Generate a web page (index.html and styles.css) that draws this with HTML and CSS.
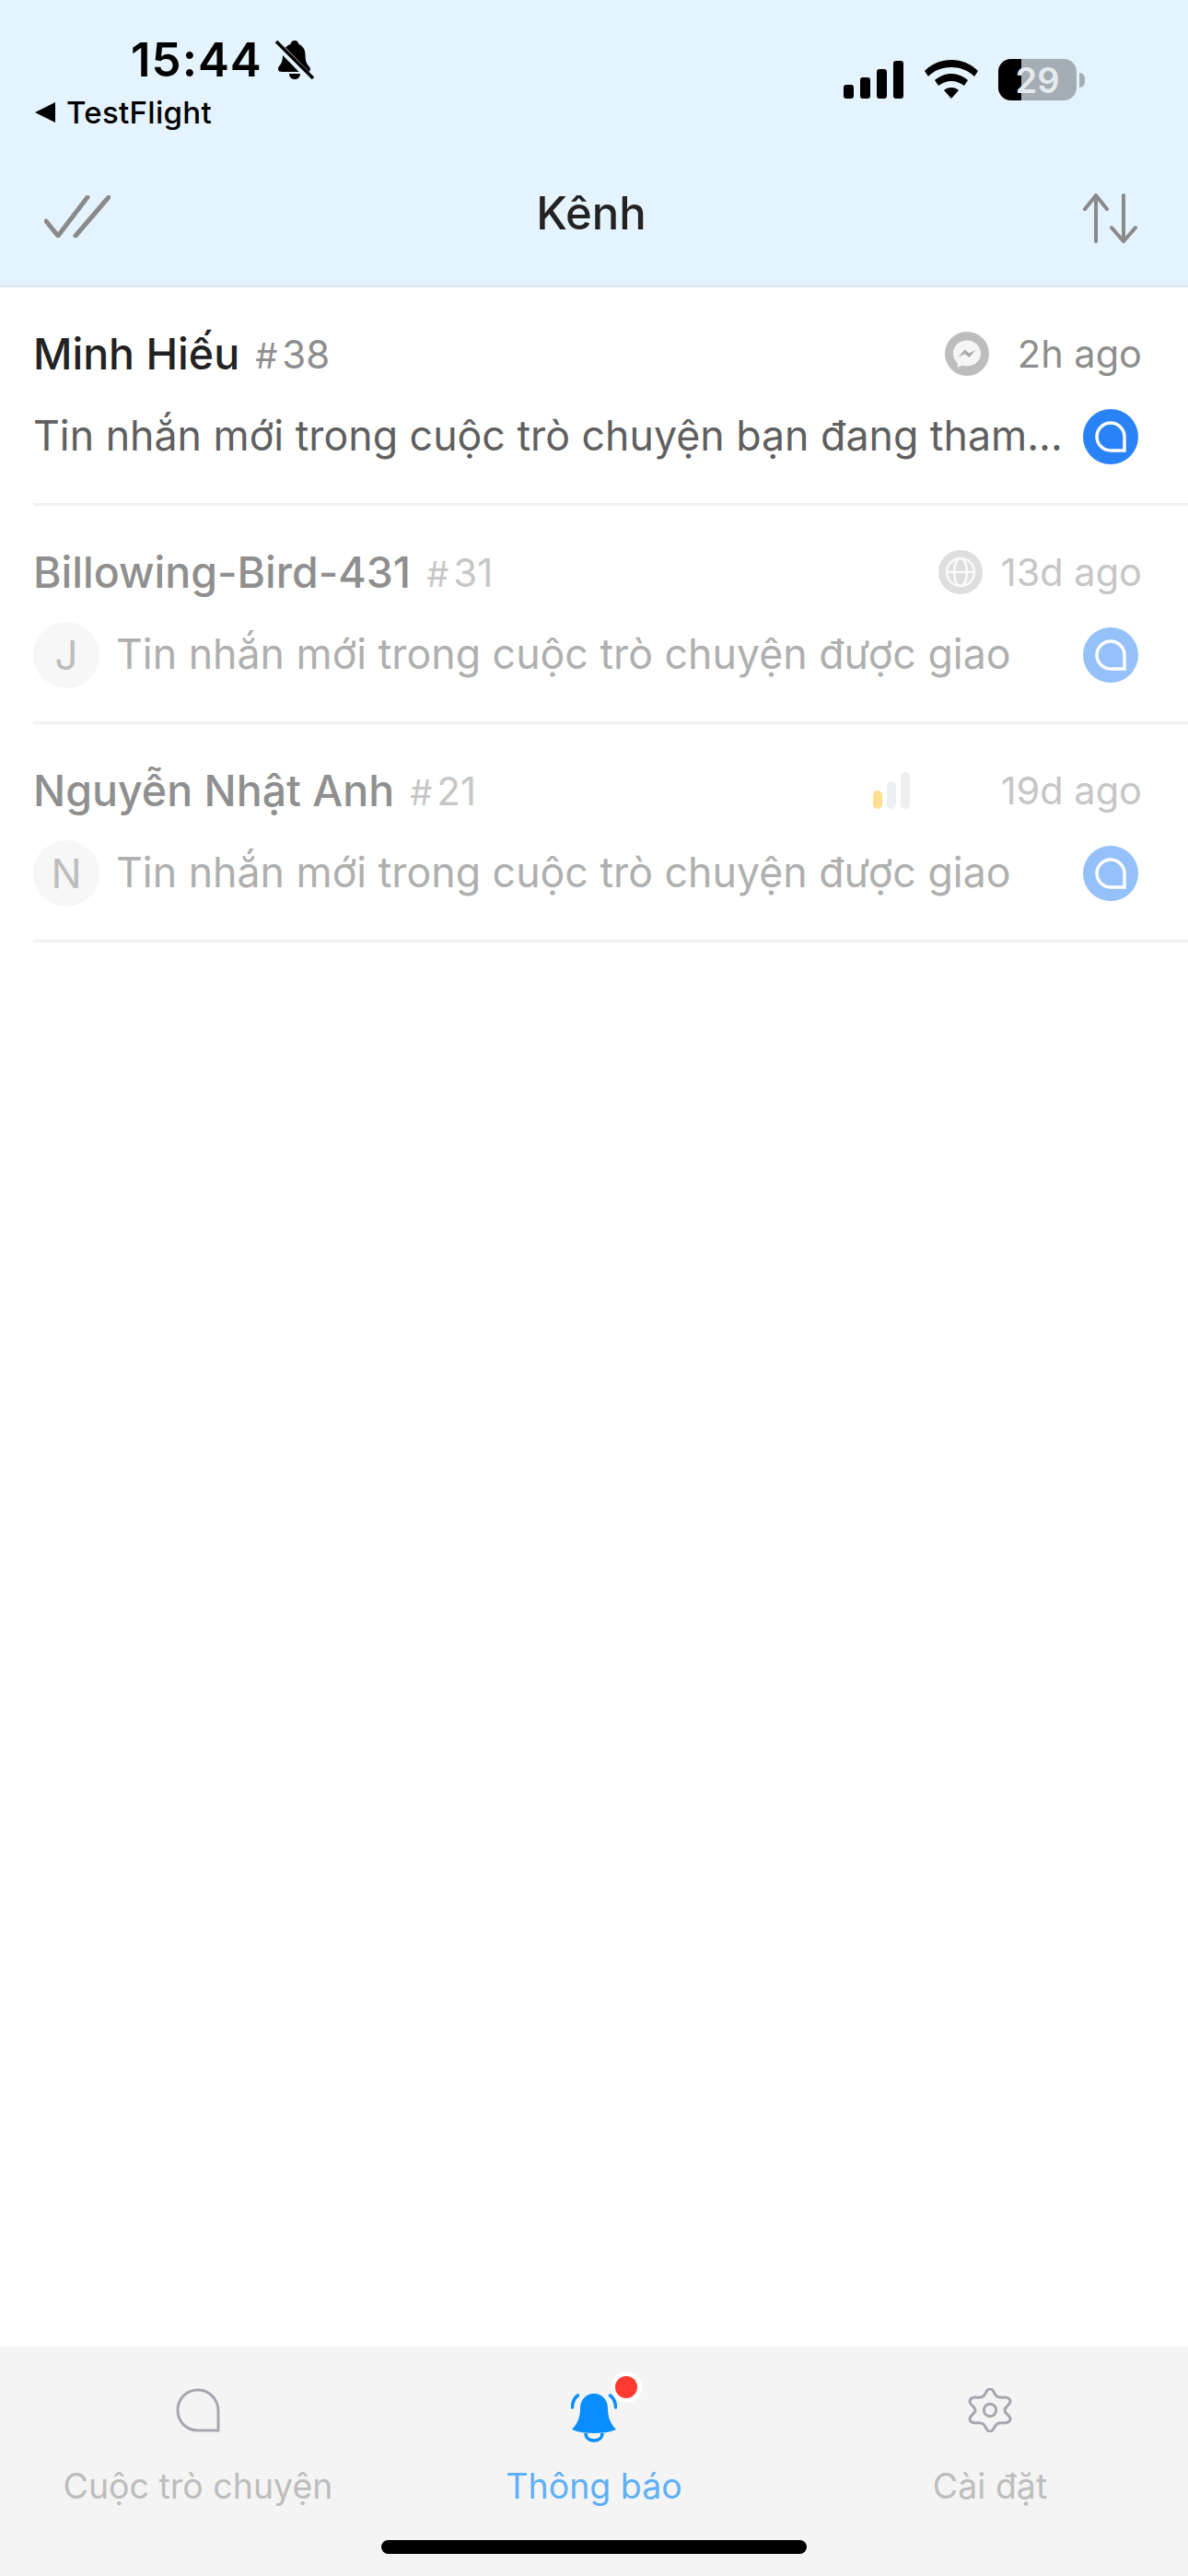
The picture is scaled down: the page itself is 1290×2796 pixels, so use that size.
FILE: index.html
```html
<!DOCTYPE html>
<html lang="vi">
<head>
    <meta charset="utf-8">
    <title>Kênh</title>
    <link rel="stylesheet" href="styles.css">
</head>
<body>
    <div class="app">
        <!-- Status bar and title share the pale blue header -->
        <header class="header">
            <div class="status">
                <div class="status-left">
                    <div class="clock-line">
                        <span class="clock">15:44</span>
                        <svg class="muted-bell" viewBox="0 0 42 44">
                            <path d="M21 1c3 0 4 2 4.5 4 4.5 2 7 6 7 11 0 6 1 10 4 13 2 2 2 6-1 6H7c-4 0-5-3-3-6 3-3 4-7 4-12 0-6 3-10 8.5-12C17 3 18 1 21 1z" fill="#000"/>
                            <path d="M15 37h12c0 4-3 6-6 6s-6-2-6-6z" fill="#000"/>
                            <path d="M1 4l38 39" stroke="#e4f3fd" stroke-width="8"/>
                            <path d="M1 2l40 40" stroke="#000" stroke-width="3.5"/>
                        </svg>
                    </div>
                    <div class="back-line">
                        <span class="back-arrow"></span>
                        <span class="back-label">TestFlight</span>
                    </div>
                </div>
                <div class="status-right">
                    <svg class="signal" viewBox="0 0 65 41">
                        <rect x="0" y="26" width="11" height="15" rx="3"/>
                        <rect x="18" y="18" width="11" height="23" rx="3"/>
                        <rect x="36" y="9" width="11" height="32" rx="3"/>
                        <rect x="54" y="0" width="11" height="41" rx="3"/>
                    </svg>
                    <svg class="wifi" viewBox="0 0 58 42">
                        <path d="M29 0c11 0 21 4 29 12l-4 6C47 11 38 8 29 8S11 11 4 18l-4-6C8 4 18 0 29 0z"/>
                        <path d="M29 15c7 0 13 3 18 7l-4 6c-4-3-9-5-14-5s-10 2-14 5l-4-6c5-4 11-7 18-7z"/>
                        <path d="M29 30c3 0 6 1 8 3l-8 9-8-9c2-2 5-3 8-3z"/>
                    </svg>
                    <div class="battery">
                        <div class="battery-body">
                            <span class="battery-fill"></span>
                            <span class="battery-level">29</span>
                        </div>
                        <span class="battery-nub"></span>
                    </div>
                </div>
            </div>
            <div class="titlebar">
                <svg class="check-icon" viewBox="0 0 72 46">
                    <path d="M2 28l13 16L47 2M34 44L70 2" fill="none" stroke="#8a8a8a" stroke-width="5" stroke-linecap="round" stroke-linejoin="round"/>
                </svg>
                <h1 class="title">Kênh</h1>
                <svg class="sort-icon" viewBox="0 0 60 54">
                    <path d="M14 52V2M2 17L14 2l12 15M44 2v50M31 37l13 15 13-15" fill="none" stroke="#8a8a8a" stroke-width="4" stroke-linecap="round" stroke-linejoin="round"/>
                </svg>
            </div>
        </header>

        <main class="list">
            <div class="row">
                <div class="row-top">
                    <span class="name">Minh Hiếu</span>
                    <span class="tag"><span class="hash">#</span>38</span>
                    <svg class="source source-messenger" viewBox="0 0 48 48">
                        <circle cx="24" cy="24" r="24" fill="#bdbdbd"/>
                        <path d="M24 9.5c-8.500 0-15 6-15 14 0 4.300 1.800 8 4.800 10.500v5l4.700-2.500c1.700.5 3.500.7 5.500.7 8.500 0 15-6 15-13.700S32.500 9.500 24 9.500z" fill="#f6f6f6"/>
                        <path d="M14.500 28l7-8.500 5 4 7-4-7 8.500-5-4z" fill="#a9a9a9"/>
                    </svg>
                    <span class="time">2h ago</span>
                </div>
                <div class="row-bottom">
                    <span class="message">Tin nhắn mới trong cuộc trò chuyện bạn đang tham...</span>
                    <span class="unread">
                        <svg class="bubble" viewBox="0 0 34 34"><path d="M17 2a15 15 0 0 1 15 15v15H17a15 15 0 0 1 0-30z"/></svg>
                    </span>
                </div>
            </div>

            <div class="row row-read">
                <div class="row-top">
                    <span class="name">Billowing-Bird-431</span>
                    <span class="tag"><span class="hash">#</span>31</span>
                    <svg class="source source-web" viewBox="0 0 48 48">
                        <circle cx="24" cy="24" r="24" fill="#dedede"/>
                        <g fill="none" stroke="#fafafa" stroke-width="2.5">
                            <circle cx="24" cy="24" r="15"/>
                            <ellipse cx="24" cy="24" rx="7" ry="15"/>
                            <path d="M9 24h30"/>
                        </g>
                    </svg>
                    <span class="time">13d ago</span>
                </div>
                <div class="row-bottom">
                    <span class="avatar">J</span>
                    <span class="message">Tin nhắn mới trong cuộc trò chuyện được giao</span>
                    <span class="unread">
                        <svg class="bubble" viewBox="0 0 34 34"><path d="M17 2a15 15 0 0 1 15 15v15H17a15 15 0 0 1 0-30z"/></svg>
                    </span>
                </div>
            </div>

            <div class="row row-read">
                <div class="row-top">
                    <span class="name">Nguyễn Nhật Anh</span>
                    <span class="tag"><span class="hash">#</span>21</span>
                    <span class="priority">
                        <span class="bar bar-low"></span>
                        <span class="bar bar-mid"></span>
                        <span class="bar bar-high"></span>
                    </span>
                    <span class="time">19d ago</span>
                </div>
                <div class="row-bottom">
                    <span class="avatar">N</span>
                    <span class="message">Tin nhắn mới trong cuộc trò chuyện được giao</span>
                    <span class="unread">
                        <svg class="bubble" viewBox="0 0 34 34"><path d="M17 2a15 15 0 0 1 15 15v15H17a15 15 0 0 1 0-30z"/></svg>
                    </span>
                </div>
            </div>
        </main>

        <nav class="tabs">
            <div class="tab">
                <svg class="tab-icon" viewBox="0 0 48 48">
                    <path d="M24 2c12 0 22 10 22 23v21H24C12 46 2 37 2 24S12 2 24 2z" fill="none" stroke="#a6a6ae" stroke-width="3"/>
                </svg>
                <span class="tab-label">Cuộc trò chuyện</span>
            </div>
            <div class="tab tab-active">
                <div class="bell-wrap">
                    <svg class="bell-icon" viewBox="0 0 50 54">
                        <path d="M25 1c9 0 15 7 15 16 0 8 2 16 9 23-7 3-16 4-24 4s-17-1-24-4c7-7 9-15 9-23 0-9 6-16 15-16z" fill="#0a8dff"/>
                        <path d="M16 44c0 5 4 8 9 8s9-3 9-8" fill="none" stroke="#0a8dff" stroke-width="3.5"/>
                        <path d="M1.500 16c0-5 2-10 6-13M48.500 16c0-5-2-10-6-13" fill="none" stroke="#0a8dff" stroke-width="3.5" stroke-linecap="round"/>
                    </svg>
                    <span class="badge"></span>
                </div>
                <span class="tab-label">Thông báo</span>
            </div>
            <div class="tab">
                <svg class="tab-icon" viewBox="30 36 144 144">
                    <path d="M102 38C116 38 114 60 128 65C142 70 160 60 167 75C174 90 150 94 150 108C150 122 174 126 167 141C160 156 142 146 128 151C114 156 116 178 102 178C88 178 90 156 76 151C62 146 44 156 37 141C30 126 54 122 54 108C54 94 30 90 37 75C44 60 62 70 76 65C90 60 88 38 102 38Z" fill="none" stroke="#a6a6ae" stroke-width="9"/>
                    <circle cx="102" cy="108" r="20" fill="none" stroke="#a6a6ae" stroke-width="9"/>
                </svg>
                <span class="tab-label">Cài đặt</span>
            </div>
            <span class="home-indicator"></span>
        </nav>
    </div>
</body>
</html>
```

FILE: styles.css
```css
body {
    margin: 0;
    padding: 0;
    font-family: 'Inter', 'Noto Sans', sans-serif;
    background: #fff;
}
.app {
    width: 1290px;
    height: 2796px;
    display: flex;
    flex-direction: column;
    overflow: hidden;
}

/* header */
.header {
    height: 309px;
    background: #e4f3fd;
    border-bottom: 3px solid #dce9f3;
    display: flex;
    flex-direction: column;
}
.status {
    height: 150px;
    display: flex;
    justify-content: space-between;
}
.status-left {
    padding: 34px 0 0 38px;
}
.clock-line {
    display: flex;
    align-items: center;
    gap: 14px;
    margin-left: 104px;
    height: 62px;
}
.clock {
    font-size: 51px;
    font-weight: 600;
    letter-spacing: 1px;
    line-height: 62px;
    color: #000;
}
.muted-bell {
    width: 42px;
    height: 44px;
}
.back-line {
    display: flex;
    align-items: center;
    gap: 12px;
    height: 40px;
    margin-top: 6px;
}
.back-arrow {
    width: 0;
    height: 0;
    border-top: 11px solid transparent;
    border-bottom: 11px solid transparent;
    border-right: 22px solid #000;
}
.back-label {
    font-size: 33px;
    font-weight: 500;
    letter-spacing: 0.3px;
    color: #000;
}
.status-right {
    display: flex;
    align-items: flex-start;
    padding: 64px 112px 0 0;
}
.signal {
    width: 65px;
    height: 41px;
    margin-top: 2px;
}
.wifi {
    width: 58px;
    height: 42px;
    margin: 1px 22px 0 23px;
}
.battery {
    display: flex;
    align-items: center;
    height: 45px;
}
.battery-body {
    position: relative;
    display: flex;
    align-items: center;
    justify-content: center;
    width: 85px;
    height: 45px;
    border-radius: 14px;
    background: #a3adb3;
}
.battery-fill {
    position: absolute;
    left: 0;
    top: 0;
    width: 25px;
    height: 45px;
    border-radius: 14px 0 0 14px;
    background: #000;
}
.battery-level {
    position: relative;
    font-size: 38px;
    font-weight: 600;
    color: #e4eaee;
}
.battery-nub {
    width: 6px;
    height: 16px;
    margin-left: 3px;
    background: #a3adb3;
    border-radius: 0 6px 6px 0;
}
.titlebar {
    flex: 1;
    display: grid;
    grid-template-columns: 1fr auto 1fr;
    align-items: center;
    padding: 11px 54px 0 48px;
}
.check-icon {
    width: 72px;
    height: 46px;
}
.title {
    margin: 0 0 7px;
    font-size: 49px;
    font-weight: 500;
    color: #222;
}
.sort-icon {
    justify-self: end;
    width: 60px;
    height: 54px;
    margin-top: 4px;
}

/* channel list */
.list {
    flex: 1;
}
.row {
    height: 186px;
    margin-left: 36px;
    padding: 48px 54px 0 0;
    border-bottom: 3px solid #f1f1f1;
}
.row-top {
    display: flex;
    align-items: center;
    height: 48px;
}
.name {
    font-size: 46.5px;
    font-weight: 500;
    color: #222;
}
.tag {
    margin-left: 17px;
    flex: 1;
    font-size: 42px;
    color: #8e8e8e;
}
.hash {
    margin-right: 5px;
    font-size: 38px;
}
.source {
    width: 48px;
    height: 48px;
}
.source-messenger {
    margin-right: 31px;
}
.source-web {
    margin-right: 20px;
}
.priority {
    display: flex;
    align-items: flex-end;
    gap: 5px;
    height: 40px;
    margin-right: 99px;
}
.bar {
    width: 10px;
    border-radius: 5px;
    background: #eeeff1;
}
.bar-low {
    height: 20px;
    background: #ffdf8f;
}
.bar-mid {
    height: 30px;
}
.bar-high {
    height: 40px;
}
.time {
    margin-right: -4px;
    font-size: 41.5px;
    color: #8e8e8e;
}
.row-bottom {
    display: flex;
    align-items: center;
    height: 60px;
    margin-top: 36px;
    gap: 24px;
}
.message {
    flex: 1;
    min-width: 0;
    padding-bottom: 2px;
    font-size: 44.7px;
    color: #5f5f5f;
    white-space: nowrap;
}
.avatar {
    width: 72px;
    height: 72px;
    margin-right: -6px;
    flex-shrink: 0;
    display: flex;
    align-items: center;
    justify-content: center;
    border-radius: 50%;
    background: #f7f7f7;
    font-size: 44px;
    color: #bdbdbd;
}
.unread {
    width: 60px;
    height: 60px;
    flex-shrink: 0;
    display: flex;
    align-items: center;
    justify-content: center;
    border-radius: 50%;
    background: #2a82f7;
}
.bubble {
    width: 34px;
    height: 34px;
    fill: none;
    stroke: #fff;
    stroke-width: 3.5px;
}
.row-read .name {
    color: #8f8f8f;
}
.row-read .tag {
    color: #c6c6c6;
}
.row-read .time {
    color: #c6c6c6;
}
.row-read .message {
    color: #afafaf;
}
.row-read .unread {
    background: #94c1fa;
}

/* bottom tabs */
.tabs {
    position: relative;
    height: 249px;
    background: #f4f4f4;
    display: grid;
    grid-template-columns: repeat(3, 1fr);
}
.tab {
    display: flex;
    flex-direction: column;
    align-items: center;
    padding-top: 45px;
}
.tab-icon {
    display: block;
    width: 48px;
    height: 48px;
}
.bell-wrap {
    position: relative;
    height: 48px;
}
.bell-icon {
    display: block;
    width: 50px;
    height: 54px;
    padding-top: 5px;
}
.badge {
    position: absolute;
    top: -18px;
    left: 43px;
    width: 24px;
    height: 24px;
    border-radius: 50%;
    background: #ff3b30;
    border: 5px solid #fff;
}
.tab-label {
    margin-top: 36px;
    font-size: 37.5px;
    color: #bdbdbd;
}
.tab-active .tab-label {
    color: #5fb0f5;
}
.home-indicator {
    position: absolute;
    left: 414px;
    top: 210px;
    width: 462px;
    height: 15px;
    border-radius: 8px;
    background: #000;
}
```
